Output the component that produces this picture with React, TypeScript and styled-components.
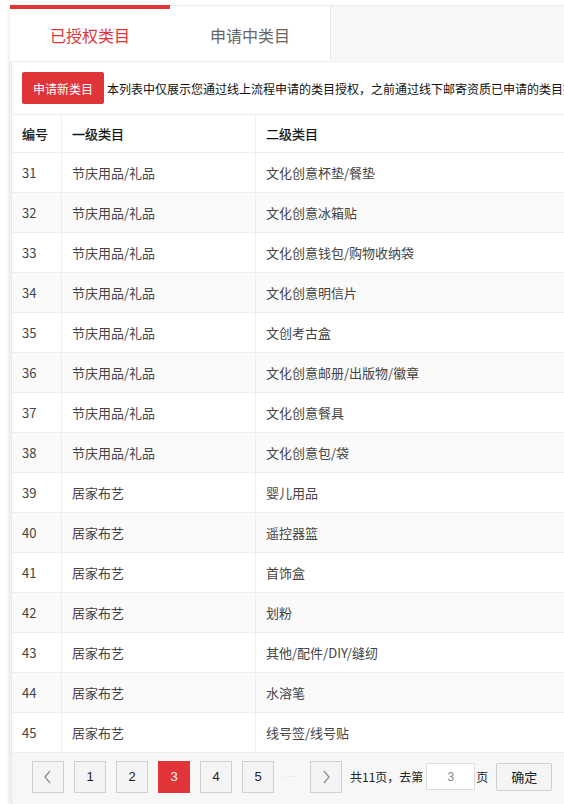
import React from 'react';
import styled, { createGlobalStyle } from 'styled-components';

const GlobalStyle = createGlobalStyle`
  html, body {
    margin: 0;
    padding: 0;
    background: #fff;
    overflow: hidden;
  }
  body {
    font-family: "Noto Sans CJK SC", "Noto Sans", "Liberation Sans", sans-serif;
    color: #333;
  }
  * {
    box-sizing: border-box;
  }
`;

const RED = '#e03438';

const Wrapper = styled.div`
  width: 820px;
  margin: 5px 0 0 10px;
  box-shadow: -2px 0 3px rgba(0, 0, 0, 0.06);
`;

const TabBar = styled.div`
  display: flex;
  height: 56px;
`;

const Tab = styled.div<{ $active?: boolean }>`
  width: ${(p) => (p.$active ? '160px' : '161px')};
  height: 56px;
  display: flex;
  align-items: center;
  justify-content: center;
  background: #fff;
  font-size: 16px;
  color: ${(p) => (p.$active ? RED : '#666')};
  border-top: ${(p) => (p.$active ? `4px solid ${RED}` : '1px solid #eee')};
  padding-top: ${(p) => (p.$active ? '0' : '3px')};
  border-right: ${(p) => (p.$active ? 'none' : '1px solid #e8e8e8')};
`;

const TabFiller = styled.div`
  flex: 1;
  background: #f7f7f7;
  border-top: 1px solid #eee;
`;

const Panel = styled.div`
  margin-left: 1px;
  background: #fff;
  border-top: 1px solid #eee;
  border-left: 1px solid #e6e6e6;
  box-shadow: -2px 0 3px rgba(0, 0, 0, 0.05);
`;

const ActionRow = styled.div`
  display: flex;
  align-items: center;
  padding: 10px 0 10px 10px;
  white-space: nowrap;
`;

const PrimaryButton = styled.button`
  height: 32px;
  padding: 0 11px;
  border: none;
  border-radius: 2px;
  background: ${RED};
  color: #fff;
  font-family: inherit;
  font-size: 12px;
  cursor: pointer;
`;

const Notice = styled.span`
  margin-left: 3px;
  font-size: 12px;
  color: #111;
`;

const Row = styled.div<{ $head?: boolean; $striped?: boolean }>`
  display: grid;
  grid-template-columns: 50px 194px 1fr;
  height: ${(p) => (p.$head ? '39px' : '40px')};
  border-top: ${(p) => (p.$head ? '1px solid #eee' : 'none')};
  border-bottom: 1px solid #eee;
  background: ${(p) => (p.$striped ? '#fafafa' : '#fff')};
  font-size: 13px;
  color: ${(p) => (p.$head ? '#111' : '#444')};
  -webkit-text-stroke: ${(p) => (p.$head ? '0.25px #111' : '0')};
`;

const Cell = styled.div<{ $last?: boolean }>`
  display: flex;
  align-items: center;
  padding-left: 10px;
  border-right: ${(p) => (p.$last ? 'none' : '1px solid #eee')};
  white-space: nowrap;
`;

const Pager = styled.div`
  display: flex;
  align-items: center;
  height: 51px;
  padding: 0 0 4px 20px;
  background: #f7f7f7;
  font-size: 12px;
  color: #222;
`;

const PageBtn = styled.div<{ $active?: boolean }>`
  width: 32px;
  height: 32px;
  margin-right: 10px;
  display: flex;
  align-items: center;
  justify-content: center;
  border: 1px solid ${(p) => (p.$active ? RED : '#d0d0d0')};
  background: ${(p) => (p.$active ? RED : '#f4f4f4')};
  color: ${(p) => (p.$active ? '#fff' : '#222')};
  font-size: 13px;
  font-family: "Liberation Sans", "Noto Sans", sans-serif;
`;

const Dots = styled.span`
  width: 16px;
  margin-right: 10px;
  color: #bbb;
  font-size: 8px;
  letter-spacing: 2px;
  font-family: "Liberation Sans", sans-serif;
  white-space: nowrap;
`;

const PagerText = styled.span`
  margin-left: -2px;
  font-size: 12px;
`;

const PageInput = styled.input`
  width: 49px;
  height: 27px;
  margin: 0 3px;
  border: 1px solid #ddd;
  background: #fff;
  text-align: center;
  font-size: 12px;
  color: #889;
  outline: none;
`;

const ConfirmBtn = styled.button`
  width: 56px;
  height: 28px;
  margin-left: 8px;
  border: 1px solid #d0d0d0;
  border-radius: 2px;
  background: #f4f4f4;
  font-family: inherit;
  font-size: 13px;
  color: #222;
`;

const Chevron = ({ dir }: { dir: 'left' | 'right' }) => (
  <svg width="10" height="14" viewBox="0 0 10 14">
    <polyline
      points={dir === 'left' ? '7,1 2,7 7,13' : '3,1 8,7 3,13'}
      fill="none"
      stroke="#8a8a8a"
      strokeWidth="1.2"
    />
  </svg>
);

const rows: [number, string, string][] = [
  [31, '节庆用品/礼品', '文化创意杯垫/餐垫'],
  [32, '节庆用品/礼品', '文化创意冰箱贴'],
  [33, '节庆用品/礼品', '文化创意钱包/购物收纳袋'],
  [34, '节庆用品/礼品', '文化创意明信片'],
  [35, '节庆用品/礼品', '文创考古盒'],
  [36, '节庆用品/礼品', '文化创意邮册/出版物/徽章'],
  [37, '节庆用品/礼品', '文化创意餐具'],
  [38, '节庆用品/礼品', '文化创意包/袋'],
  [39, '居家布艺', '婴儿用品'],
  [40, '居家布艺', '遥控器篮'],
  [41, '居家布艺', '首饰盒'],
  [42, '居家布艺', '划粉'],
  [43, '居家布艺', '其他/配件/DIY/缝纫'],
  [44, '居家布艺', '水溶笔'],
  [45, '居家布艺', '线号签/线号贴'],
];

const App = () => {
  return (
    <>
      <GlobalStyle />
      <Wrapper>
        <TabBar>
          <Tab $active>已授权类目</Tab>
          <Tab>申请中类目</Tab>
          <TabFiller />
        </TabBar>
        <Panel>
          <ActionRow>
            <PrimaryButton>申请新类目</PrimaryButton>
            <Notice>
              本列表中仅展示您通过线上流程申请的类目授权，之前通过线下邮寄资质已申请的类目授权请联系客服查询
            </Notice>
          </ActionRow>
          <Row $head>
            <Cell>编号</Cell>
            <Cell>一级类目</Cell>
            <Cell $last>二级类目</Cell>
          </Row>
          {rows.map(([id, first, second], i) => (
            <Row key={id} $striped={i % 2 === 1}>
              <Cell>{id}</Cell>
              <Cell>{first}</Cell>
              <Cell $last>{second}</Cell>
            </Row>
          ))}
          <Pager>
            <PageBtn>
              <Chevron dir="left" />
            </PageBtn>
            {[1, 2, 3, 4, 5].map((n) => (
              <PageBtn key={n} $active={n === 3}>
                {n}
              </PageBtn>
            ))}
            <Dots>···</Dots>
            <PageBtn>
              <Chevron dir="right" />
            </PageBtn>
            <PagerText>共11页，去第</PagerText>
            <PageInput defaultValue="3" />
            <PagerText>页</PagerText>
            <ConfirmBtn>确定</ConfirmBtn>
          </Pager>
        </Panel>
      </Wrapper>
    </>
  );
};

export default App;
